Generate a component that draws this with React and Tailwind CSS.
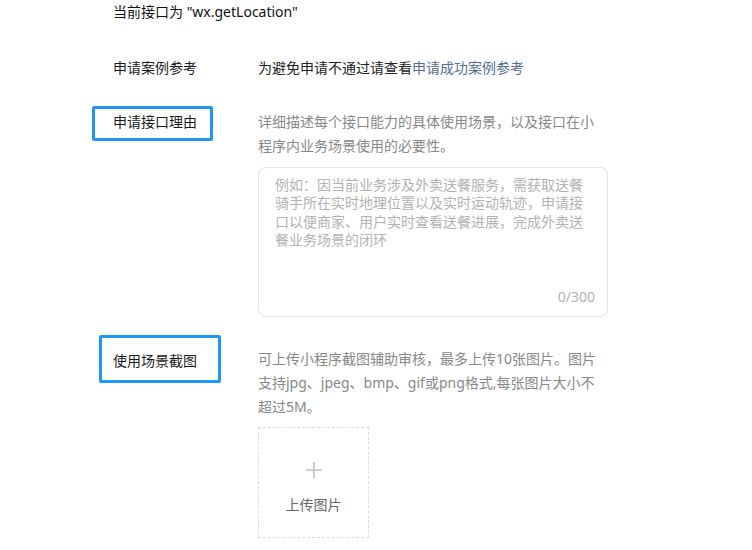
export default function App() {
  return (
    <div className="w-[752px] h-[550px] bg-white overflow-hidden font-['Noto_Sans','Noto_Sans_CJK_SC',sans-serif] text-sm text-[#1a1a1a]">
      <div className="pl-[113px]">
        <div className="leading-6 text-[#111]">当前接口为 "wx.getLocation"</div>

        <div className="flex mt-8 leading-6">
          <div className="w-[145px] shrink-0">申请案例参考</div>
          <div className="text-[#222]">
            为避免申请不通过请查看<span className="text-[#576b95]">申请成功案例参考</span>
          </div>
        </div>

        <div className="flex mt-[30px] leading-6">
          <div className="w-[145px] shrink-0">
            <div className="relative inline-block">
              申请接口理由
              <span className="absolute left-[-21px] top-[-4px] w-[121px] h-[35px] border-[3px] border-[#2196f3] rounded-[2px]"></span>
            </div>
          </div>
          <div className="w-[350px]">
            <div className="w-[344px] text-[#888]">详细描述每个接口能力的具体使用场景，以及接口在小程序内业务场景使用的必要性。</div>
            <div className="mt-[9px] w-[350px] h-[150px] border border-[#e3e3e3] rounded-lg flex flex-col justify-between pl-4 pr-3 pt-2 pb-[9px]">
              <div className="text-[#b2b2b2] leading-[18.4px] pr-1">例如：因当前业务涉及外卖送餐服务，需获取送餐骑手所在实时地理位置以及实时运动轨迹，申请接口以便商家、用户实时查看送餐进展，完成外卖送餐业务场景的闭环</div>
              <div className="text-right text-[#b2b2b2] leading-5">0/300</div>
            </div>
          </div>
        </div>

        <div className="flex mt-[30px] leading-6">
          <div className="w-[145px] shrink-0">
            <div className="relative inline-block mt-[2px]">
              使用场景截图
              <span className="absolute left-[-14px] top-[-14px] w-[122px] h-[48px] border-[3px] border-[#2196f3] rounded-[2px]"></span>
            </div>
          </div>
          <div className="w-[350px]">
            <div className="w-[344px] text-[#888]">可上传小程序截图辅助审核，最多上传10张图片。图片支持jpg、jpeg、bmp、gif或png格式,每张图片大小不超过5M。</div>
            <div className="mt-2 w-[111px] h-[111px] border border-dashed border-[#dcdcdc] flex flex-col items-center">
              <svg width="18" height="18" viewBox="0 0 18 18" className="mt-[33px]">
                <path d="M9 1v16M1 9h16" stroke="#bdbdbd" strokeWidth="1.6" />
              </svg>
              <div className="mt-[16px] text-[#666] leading-5">上传图片</div>
            </div>
          </div>
        </div>
      </div>
    </div>
  );
}
